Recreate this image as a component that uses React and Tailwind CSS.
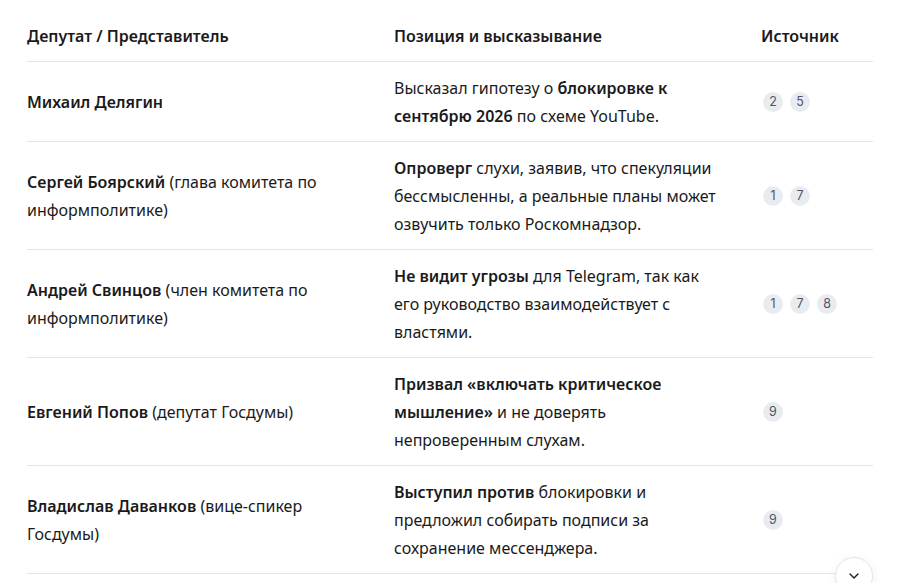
import React from "react";
import { ChevronDown } from "lucide-react";

const rows = [
  {
    name: "Михаил Делягин",
    role: "",
    pos: [
      ["Высказал гипотезу о ", false],
      ["блокировке к сентябрю 2026", true],
      [" по схеме YouTube.", false],
    ],
    src: [2, 5],
  },
  {
    name: "Сергей Боярский",
    role: "(глава комитета по информполитике)",
    pos: [
      ["Опроверг", true],
      [" слухи, заявив, что спекуляции бессмысленны, а реальные планы может озвучить только Роскомнадзор.", false],
    ],
    src: [1, 7],
  },
  {
    name: "Андрей Свинцов",
    role: "(член комитета по информполитике)",
    pos: [
      ["Не видит угрозы", true],
      [" для Telegram, так как его руководство взаимодействует с властями.", false],
    ],
    src: [1, 7, 8],
  },
  {
    name: "Евгений Попов",
    role: "(депутат Госдумы)",
    pos: [
      ["Призвал «включать критическое мышление»", true],
      [" и не доверять непроверенным слухам.", false],
    ],
    src: [9],
  },
  {
    name: "Владислав Даванков",
    role: "(вице-спикер Госдумы)",
    pos: [
      ["Выступил против", true],
      [" блокировки и предложил собирать подписи за сохранение мессенджера.", false],
    ],
    src: [9],
  },
];

const App = () => {
  return (
    <div className="relative h-[583px] w-[909px] overflow-hidden bg-white font-['Noto_Sans',sans-serif] text-[16px] leading-7 text-[#1a1a1a]">
      <div className="ml-[27px] w-[846px]">
        <div className="grid grid-cols-[367px_367px_1fr] border-b border-[#e5e5e5] pt-[22px] pb-[11px] font-semibold">
          <div className="pr-10">Депутат / Представитель</div>
          <div className="pr-10">Позиция и высказывание</div>
          <div>Источник</div>
        </div>
        {rows.map((r) => (
          <div
            key={r.name}
            className="grid grid-cols-[367px_367px_1fr] items-center border-b border-[#e5e5e5] pt-3 pb-[11px]"
          >
            <div className="pr-10">
              <span className="font-semibold">{r.name}</span>
              {r.role && <span> {r.role}</span>}
            </div>
            <div className="pr-10">
              {r.pos.map(([t, b], i) =>
                b ? (
                  <strong key={i} className="font-semibold">
                    {t}
                  </strong>
                ) : (
                  <span key={i}>{t}</span>
                )
              )}
            </div>
            <div className="flex gap-[7px] pl-[2px]">
              {r.src.map((n) => (
                <span
                  key={n}
                  className="flex h-5 w-5 items-center justify-center rounded-full bg-[#e8ecf1] font-['Inter',sans-serif] text-[12.5px] leading-none text-[#50565f]"
                >
                  {n}
                </span>
              ))}
            </div>
          </div>
        ))}
      </div>
      <button className="absolute left-[835px] top-[557px] flex h-[38px] w-[38px] items-center justify-center rounded-full border border-[#e5e5e5] bg-white shadow-[0_2px_12px_rgba(0,0,0,0.06)]">
        <ChevronDown size={16} strokeWidth={2} className="text-[#1a1a1a]" />
      </button>
    </div>
  );
};

export default App;
